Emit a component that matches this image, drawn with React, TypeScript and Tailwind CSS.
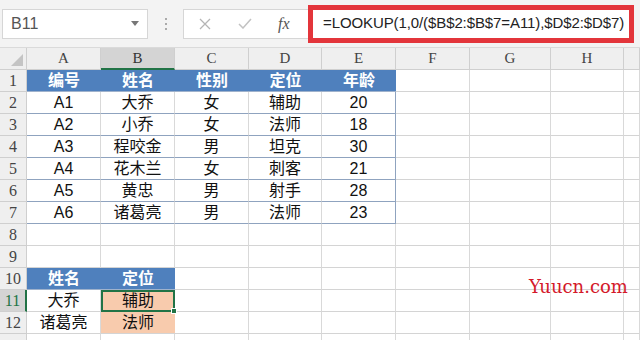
import React from "react";

const cjk = { fontFamily: '"Liberation Sans", "Noto Sans CJK SC", sans-serif' };

const colLetters = ["A", "B", "C", "D", "E", "F", "G", "H", ""];

type Row = { n: number; cells: string[]; kind?: "head" | "data" | "empty" };

const rows: Row[] = [
  { n: 1, cells: ["编号", "姓名", "性别", "定位", "年龄"], kind: "head" },
  { n: 2, cells: ["A1", "大乔", "女", "辅助", "20"], kind: "data" },
  { n: 3, cells: ["A2", "小乔", "女", "法师", "18"], kind: "data" },
  { n: 4, cells: ["A3", "程咬金", "男", "坦克", "30"], kind: "data" },
  { n: 5, cells: ["A4", "花木兰", "女", "刺客", "21"], kind: "data" },
  { n: 6, cells: ["A5", "黄忠", "男", "射手", "28"], kind: "data" },
  { n: 7, cells: ["A6", "诸葛亮", "男", "法师", "23"], kind: "data" },
  { n: 8, cells: [] },
  { n: 9, cells: [] },
  { n: 10, cells: ["姓名", "定位"], kind: "head" },
  { n: 11, cells: ["大乔", "辅助"], kind: "data" },
  { n: 12, cells: ["诸葛亮", "法师"], kind: "data" },
  { n: 13, cells: [] },
];

function Toolbar() {
  return (
    <div className="flex h-[48px] items-center bg-[#f3f3f3] border-b border-[#dadada]">
      {/* name box */}
      <div className="ml-[2px] flex h-[30px] w-[146px] items-center justify-between border border-[#d6d6d6] bg-white pl-[8px] pr-[8px]">
        <span className="text-[16px] text-[#555]" style={cjk}>B11</span>
        <svg width="8" height="5" viewBox="0 0 8 5"><path d="M0 0h8L4 5z" fill="#777" /></svg>
      </div>
      {/* splitter dots */}
      <div className="flex w-[35px] flex-col items-center gap-[3px]">
        <div className="h-[2px] w-[2px] bg-[#aaa]" />
        <div className="h-[2px] w-[2px] bg-[#aaa]" />
        <div className="h-[2px] w-[2px] bg-[#aaa]" />
      </div>
      {/* formula bar */}
      <div className="flex h-[30px] w-[125px] items-center border border-r-0 border-[#d6d6d6] bg-white">
        <svg className="ml-[15px]" width="12" height="12" viewBox="0 0 12 12">
          <path d="M1 1l10 10M11 1L1 11" stroke="#b5b5b5" strokeWidth="1.3" />
        </svg>
        <svg className="ml-[27px]" width="14" height="11" viewBox="0 0 14 11">
          <path d="M1 6l4 4 8-9" stroke="#c2c2c2" strokeWidth="1.5" fill="none" />
        </svg>
        <span className="ml-[26px] text-[16px] italic text-[#555]" style={{ fontFamily: '"Liberation Serif", serif' }}>
          fx
        </span>
      </div>
      <div className="flex h-[38px] w-[326px] items-center border-[5px] border-[#e3353b] bg-white pl-[10px]">
        <span className="whitespace-nowrap text-[15px] tracking-[-0.1px] text-[#222]" style={cjk}>
          =LOOKUP(1,0/($B$2:$B$7=A11),$D$2:$D$7)
        </span>
      </div>
    </div>
  );
}

function Sheet() {
  const serif = { fontFamily: '"Liberation Serif", "DejaVu Serif", serif' };
  return (
    <div className="grid grid-cols-[27px_74px_74px_74px_73px_74px_74px_81px_73px_16px] auto-rows-[22px] bg-white" style={cjk}>
      {/* column headers */}
      <div className="relative border-r border-b border-[#cfcfcf] bg-[#efefef]">
        <svg className="absolute right-[3px] bottom-[3px]" width="12" height="12" viewBox="0 0 12 12">
          <path d="M12 0v12H0z" fill="#c4c4c4" />
        </svg>
      </div>
      {colLetters.map((c, i) => (
        <div
          key={i}
          className={
            i === 1
              ? "flex items-center justify-center border-r border-b-2 border-r-[#cfcfcf] border-b-[#217346] bg-[#d4d4d4] text-[15px] text-[#333]"
              : "flex items-center justify-center border-r border-b border-[#cfcfcf] bg-[#efefef] text-[15px] text-[#444]"
          }
          style={serif}
        >
          {c}
        </div>
      ))}

      {rows.map((r) => {
        const inTable = r.n <= 7;
        return (
          <React.Fragment key={r.n}>
            <div
              className={
                r.n === 11
                  ? "flex items-center justify-center border-r-2 border-b border-r-[#217346] border-b-[#cfcfcf] bg-[#d4d4d4] text-[16px] text-[#217346]"
                  : "flex items-center justify-center border-r border-b border-[#cfcfcf] bg-[#efefef] text-[16px] text-[#444]"
              }
              style={serif}
            >
              {r.n < 13 ? r.n : ""}
            </div>
            {colLetters.map((_, ci) => {
              const txt = r.cells[ci];
              const has = txt !== undefined;
              if (has && r.kind === "head") {
                return (
                  <div key={ci} className="flex items-center justify-center border-b border-[#9fb2cc] bg-[#4f80bd] text-[16px] font-bold text-white">
                    {txt}
                  </div>
                );
              }
              if (has && r.n === 11 && ci === 1) {
                return (
                  <div key={ci} className="relative flex items-center justify-center border-2 border-[#217346] bg-[#f8cbad] text-[16px] text-[#111]">
                    {txt}
                    <div className="absolute -right-[4px] -bottom-[4px] h-[6px] w-[6px] border border-white bg-[#217346]" />
                  </div>
                );
              }
              if (has && r.n === 12 && ci === 1) {
                return (
                  <div key={ci} className="flex items-center justify-center border-b border-[#d4d4d4] bg-[#f8cbad] text-[16px] text-[#111]">
                    {txt}
                  </div>
                );
              }
              const rowLine = inTable && ci < 5 ? "border-b-[#8fa3bf]" : "border-b-[#d4d4d4]";
              const colLine = inTable && ci === 4 ? "border-r-[#8fa3bf]" : "border-r-[#d9d9d9]";
              return (
                <div key={ci} className={`flex items-center justify-center border-r border-b ${rowLine} ${colLine} text-[16px] text-[#111]`}>
                  {txt}
                </div>
              );
            })}
          </React.Fragment>
        );
      })}
    </div>
  );
}

export default function App() {
  return (
    <div className="relative h-[340px] w-[640px] overflow-hidden bg-white">
      <Toolbar />
      <Sheet />
      {/* watermark */}
      <div
        className="absolute left-[529px] top-[273px] text-[18px] text-[#d4192a]"
        style={{ fontFamily: '"DejaVu Serif", serif' }}
      >
        Yuucn.com
      </div>
    </div>
  );
}
